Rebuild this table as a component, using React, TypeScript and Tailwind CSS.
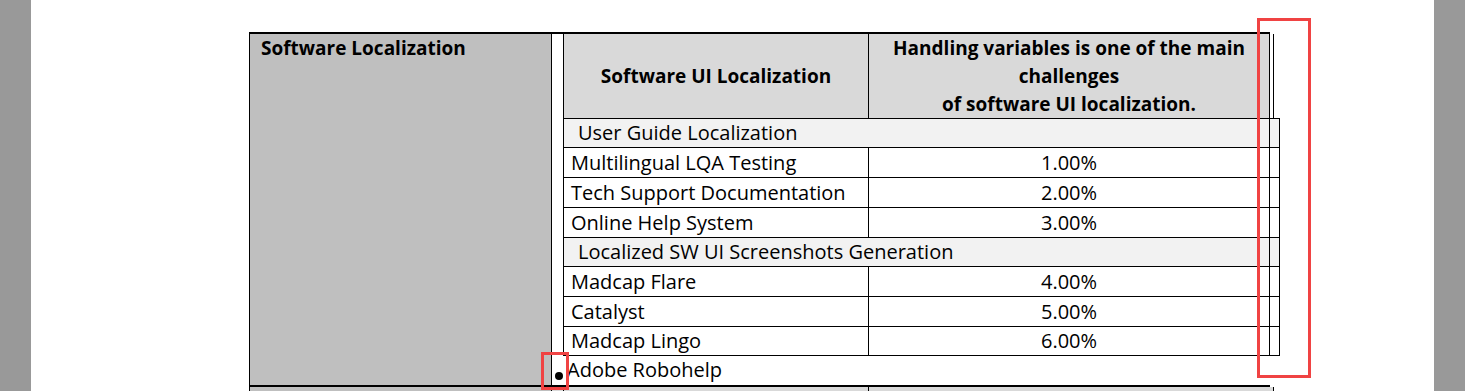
const rows: { label: string; value?: string; group?: boolean; h: string }[] = [
  { label: 'User Guide Localization', group: true, h: 'h-[29px]' },
  { label: 'Multilingual LQA Testing', value: '1.00%', h: 'h-[30px]' },
  { label: 'Tech Support Documentation', value: '2.00%', h: 'h-[30px]' },
  { label: 'Online Help System', value: '3.00%', h: 'h-[30px]' },
  { label: 'Localized SW UI Screenshots Generation', group: true, h: 'h-[29px]' },
  { label: 'Madcap Flare', value: '4.00%', h: 'h-[30px]' },
  { label: 'Catalyst', value: '5.00%', h: 'h-[30px]' },
  { label: 'Madcap Lingo', value: '6.00%', h: 'h-[30px] border-b' },
];

export default function App() {
  return (
    <div className="relative flex h-[391px] w-[1465px] overflow-hidden bg-white font-['Open_Sans','Liberation_Sans',sans-serif] text-black">
      <div className="w-[31px] shrink-0 bg-[#999999]" />

      {/* page */}
      <div className="flex-1 pl-[218px] pt-[32px]">
        <div className="flex w-[1021px]">
          {/* left grey cell */}
          <div className="w-[303px] shrink-0 border-x border-t-2 border-b-2 border-black bg-[#bfbfbf] pl-[11px] text-[19px] font-bold leading-[28px]">
            Software Localization
          </div>

          {/* right cell with nested table */}
          <div className="w-[718px] shrink-0 border-t-2 border-b-2 border-black">
            <div className="ml-[11px] w-[717px]">
              <div className="flex h-[84px] text-[19px] font-bold">
                <div className="flex w-[306px] items-center justify-center border-x border-black bg-[#d9d9d9]">
                  Software UI Localization
                </div>
                <div className="w-[401px] border-r border-black bg-[#d9d9d9] text-center leading-[28px]">
                  Handling variables is one of the main
                  <br />
                  challenges
                  <br />
                  of software UI localization.
                </div>
                <div className="w-[4px] border-r border-black" />
              </div>

              {rows.map((r) =>
                r.group ? (
                  <div key={r.label} className={`flex ${r.h} border-t border-black bg-[#f2f2f2] text-[20px]`}>
                    <div className="flex w-[707px] items-center border-x border-black pl-[14px]">{r.label}</div>
                    <div className="w-[10px] border-r border-black" />
                  </div>
                ) : (
                  <div key={r.label} className={`flex ${r.h} border-t border-black text-[20px]`}>
                    <div className="flex w-[306px] items-center border-x border-black pl-[7px]">{r.label}</div>
                    <div className="flex w-[401px] items-center justify-center border-r border-black">{r.value}</div>
                    <div className="w-[10px] border-r border-black" />
                  </div>
                ),
              )}
            </div>

            <div className="flex h-[29px] items-center pl-[3px] text-[20px]">
              <span className="mt-[10px] h-[8px] w-[8px] rounded-full bg-black" />
              <span className="ml-[4px] -translate-y-px">Adobe Robohelp</span>
            </div>
          </div>
        </div>

        {/* next row, cut off */}
        <div className="flex h-[10px]">
          <div className="w-[303px] border-x border-black bg-[#bfbfbf]" />
          <div className="w-[12px] border-r border-black bg-[#d9d9d9]" />
          <div className="w-[305px] border-r border-black bg-[#d9d9d9]" />
          <div className="w-[405px] border-r border-black bg-[#d9d9d9]" />
        </div>
      </div>

      <div className="w-[31px] shrink-0 bg-[#999999]" />

      {/* red annotation boxes */}
      <div className="absolute left-[1257px] top-[18px] h-[360px] w-[54px] border-[3px] border-[#f04343]" />
      <div className="absolute left-[541px] top-[352px] h-[38px] w-[28px] border-[3px] border-[#f04343]" />
    </div>
  );
}
